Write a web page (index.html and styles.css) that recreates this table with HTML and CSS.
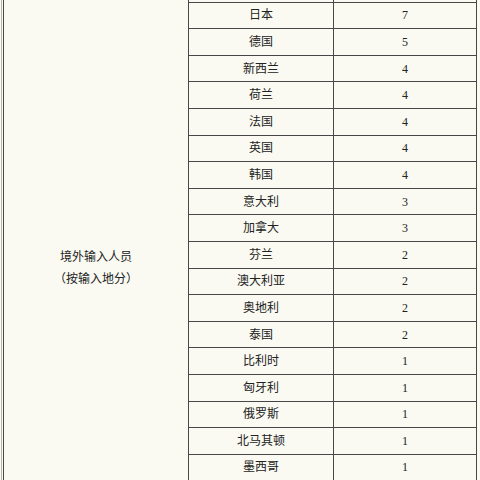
FILE: index.html
```html
<!DOCTYPE html>
<html lang="zh">
<head>
<meta charset="utf-8">
<link rel="stylesheet" href="styles.css">
</head>
<body>
<div class="frame">
<table class="stats">
<colgroup>
<col class="c-cat"><col class="c-place"><col class="c-num">
</colgroup>
<tbody>
<tr>
<td class="cat" rowspan="19"><div class="cat-text">境外输入人员<br>（按输入地分）</div></td>
<td></td><td class="num"></td>
</tr>
<tr><td>日本</td><td class="num">7</td></tr>
<tr><td>德国</td><td class="num">5</td></tr>
<tr><td>新西兰</td><td class="num">4</td></tr>
<tr><td>荷兰</td><td class="num">4</td></tr>
<tr><td>法国</td><td class="num">4</td></tr>
<tr><td>英国</td><td class="num">4</td></tr>
<tr><td>韩国</td><td class="num">4</td></tr>
<tr><td>意大利</td><td class="num">3</td></tr>
<tr><td>加拿大</td><td class="num">3</td></tr>
<tr><td>芬兰</td><td class="num">2</td></tr>
<tr><td>澳大利亚</td><td class="num">2</td></tr>
<tr><td>奥地利</td><td class="num">2</td></tr>
<tr><td>泰国</td><td class="num">2</td></tr>
<tr><td>比利时</td><td class="num">1</td></tr>
<tr><td>匈牙利</td><td class="num">1</td></tr>
<tr><td>俄罗斯</td><td class="num">1</td></tr>
<tr><td>北马其顿</td><td class="num">1</td></tr>
<tr><td>墨西哥</td><td class="num">1</td></tr>
</tbody>
</table>
</div>
</body>
</html>
```

FILE: styles.css
```css
html, body {
  margin: 0;
  padding: 0;
  height: 480px;
  overflow: hidden;
  background: #fafaf2;
}

.frame {
  margin-left: 1px;
  margin-top: -25px;
  padding-left: 1px;
  border-left: 1px solid #b8b8b2;
}

.stats {
  border-collapse: collapse;
  table-layout: fixed;
  width: 473px;
  font-family: "Liberation Serif", "Noto Sans CJK SC", serif;
  font-size: 12px;
  line-height: 22px;
  color: #222;
}

.c-cat { width: 185px; }
.c-place { width: 145px; }
.c-num { width: 143px; }

.stats tr {
  height: 26.6px;
}

.stats td {
  border: 1px solid #474747;
  padding: 0;
  text-align: center;
  vertical-align: middle;
}

.stats td.cat {
  vertical-align: top;
  padding-top: 270px;
}

.cat-text {
  line-height: 22px;
}
```
